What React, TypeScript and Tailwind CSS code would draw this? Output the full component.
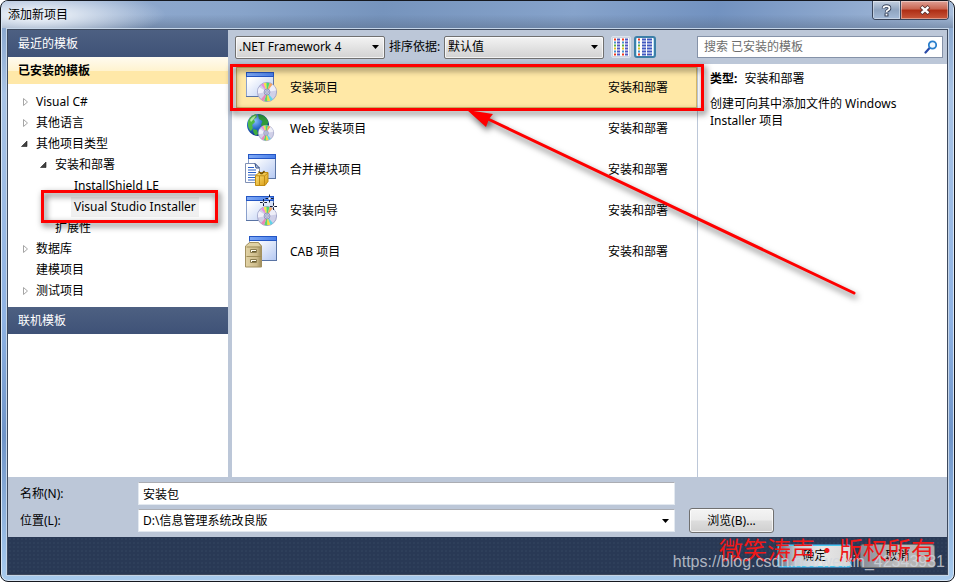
import { useState } from 'react';

const TREE = [
  { label: 'Visual C#', level: 0, state: 'closed' },
  { label: '其他语言', level: 0, state: 'closed' },
  { label: '其他项目类型', level: 0, state: 'open' },
  { label: '安装和部署', level: 1, state: 'open' },
  { label: 'InstallShield LE', level: 2, state: 'leaf' },
  { label: 'Visual Studio Installer', level: 2, state: 'leaf' },
  { label: '扩展性', level: 1, state: 'leaf' },
  { label: '数据库', level: 0, state: 'closed' },
  { label: '建模项目', level: 0, state: 'leaf' },
  { label: '测试项目', level: 0, state: 'closed' },
];

const INDENT = ['pl-[11px]', 'pl-[30px]', 'pl-[49px]'];

const TEMPLATES = [
  { name: '安装项目', icon: SetupIcon },
  { name: 'Web 安装项目', icon: WebSetupIcon },
  { name: '合并模块项目', icon: MergeIcon },
  { name: '安装向导', icon: WizardIcon },
  { name: 'CAB 项目', icon: CabIcon },
];

const ROW_COLORS = ['#f03820', '#4a90c8', '#58b040', '#e0c020', '#4a90c8', '#f03820'];

function IconDefs() {
  return (
    <svg className="absolute size-0" aria-hidden="true">
      <defs>
        <linearGradient id="win" x1="0" y1="0" x2="1" y2="1">
          <stop offset="0.2" stopColor="#ffffff" />
          <stop offset="1" stopColor="#b4c8f2" />
        </linearGradient>
        <linearGradient id="bar" x1="0" y1="0" x2="1" y2="0">
          <stop offset="0" stopColor="#7fa9f5" />
          <stop offset="1" stopColor="#4a80ea" />
        </linearGradient>
        <radialGradient id="sea" cx="0.35" cy="0.3" r="0.75">
          <stop offset="0" stopColor="#8fc4ff" />
          <stop offset="0.5" stopColor="#2566c8" />
          <stop offset="1" stopColor="#0d2f78" />
        </radialGradient>
        <linearGradient id="cab" x1="0" y1="0" x2="1" y2="0">
          <stop offset="0" stopColor="#e2d3a6" />
          <stop offset="0.7" stopColor="#cdbb8a" />
          <stop offset="1" stopColor="#9d8b58" />
        </linearGradient>
        <linearGradient id="gold" x1="0" y1="0" x2="1" y2="1">
          <stop offset="0" stopColor="#ffe680" />
          <stop offset="1" stopColor="#d89a10" />
        </linearGradient>
      </defs>
    </svg>
  );
}

function WindowShape({ x, y }: { x: number; y: number }) {
  return (
    <g transform={`translate(${x} ${y})`}>
      <rect x="0.5" y="0.5" width="27" height="24" fill="url(#win)" stroke="#8aa0cc" />
      <rect x="0" y="0" width="28" height="5" fill="#2456c4" />
      <rect x="1" y="1" width="26" height="3" fill="url(#bar)" />
      <path d="M27.5 5v20M0 24.5h28" stroke="#5a74a4" />
    </g>
  );
}

function Disc({ x, y, r }: { x: number; y: number; r: number }) {
  return (
    <g transform={`translate(${x} ${y}) scale(${r / 10})`}>
      <circle r="9.6" fill="#d0d0e8" stroke="#9498c0" strokeWidth="0.8" />
      <path d="M0 0L-6 -7.2A9.4 9.4 0 0 1 -3.4 -8.7z" fill="#e98cdc" />
      <path d="M0 0L-3.4 -8.7A9.4 9.4 0 0 1 -0.6 -9.3z" fill="#f5e440" />
      <path d="M0 0L-0.6 -9.3A9.4 9.4 0 0 1 2.6 -9z" fill="#46dc70" />
      <path d="M0 0L2.6 -9A9.4 9.4 0 0 1 5.6 -7.5z" fill="#f4a660" />
      <path d="M0 0L5.6 -7.5A9.4 9.4 0 0 1 9.2 -1.5z" fill="#eeeef8" />
      <path d="M0 0L6 7.2A9.4 9.4 0 0 1 3.2 8.8z" fill="#60d4e8" />
      <path d="M0 0L3.2 8.8A9.4 9.4 0 0 1 0.2 9.3z" fill="#f7db3a" />
      <path d="M0 0L0.2 9.3A9.4 9.4 0 0 1 -2.8 8.9z" fill="#5cd868" />
      <path d="M0 0L-2.8 8.9A9.4 9.4 0 0 1 -6 7.2z" fill="#e888b8" />
      <path d="M0 0L-9.2 1.5A9.4 9.4 0 0 1 -7.8 -5z" fill="#f0f0fa" />
      <circle r="3" fill="#c3c8e4" stroke="#8087b4" strokeWidth="0.7" />
      <circle r="1.2" fill="#ffffff" stroke="#6870a0" strokeWidth="0.6" />
    </g>
  );
}

function SetupIcon() {
  return (
    <svg className="size-[34px]" viewBox="0 0 34 34" aria-hidden="true">
      <WindowShape x={1} y={1} />
      <Disc x={22} y={21} r={10} />
    </svg>
  );
}

function WebSetupIcon() {
  return (
    <svg className="size-[34px]" viewBox="0 0 34 34" aria-hidden="true">
      <circle cx="13" cy="13" r="11" fill="url(#sea)" />
      <path d="M3 10C4 6 7 3 11 2.300L12 5L9 7.500L10 10L7 13L8 16L6 19C3.500 17 2.500 14 3 10z" fill="#4fba45" />
      <path d="M13 2.300C18 2.500 22 5.500 23.300 10L21.500 15L18.500 17L16 13L17.500 9L14 7z" fill="#2f9a3c" />
      <path d="M8 17L12 18L13 22L11 23.500C9 22.500 8 20 8 17z" fill="#3fae3f" />
      <path d="M5 8C7 5 9 4 11 3.500L9 7L6 10z" fill="#b6ecaa" />
      <Disc x={21} y={21} r={8} />
    </svg>
  );
}

function MergeIcon() {
  return (
    <svg className="size-[34px]" viewBox="0 0 34 34" aria-hidden="true">
      <WindowShape x={3} y={1} />
      <path d="M0.500 10.500h9.500l4.500 5v14h-14z" fill="#ffffff" stroke="#8090b4" />
      <path d="M10 10.500l1 4.500h3.500z" fill="#c9d5ec" stroke="#334f88" />
      <path d="M3 14.500h6M3 17h8M3 19.500h8M3 22h8M3 24.500h8M3 27h7" stroke="#2a60c8" strokeWidth="1.200" />
      <path d="M10.500 22.500l4-3h8.500v9l-3 4h-9.500z" fill="url(#gold)" stroke="#c08c14" />
      <path d="M19.500 23v9M19.500 23l3.500-3M11 22.800h8.500M14.500 23v9" fill="none" stroke="#c08c14" />
      <path d="M16.500 21l-3-2.500M16.500 21l3-3" stroke="#725006" strokeWidth="1.500" />
    </svg>
  );
}

function WizardIcon() {
  return (
    <svg className="size-[34px]" viewBox="0 0 34 34" aria-hidden="true">
      <WindowShape x={1} y={2} />
      <Disc x={22} y={22} r={10} />
      <path d="M24.500 0.500v8M20.500 4.500h8M18.500 5v7M15 8.500h7M28.500 9v7M25 12.500h7" stroke="#141c38" />
      <path d="M24.500 3l1.500 1.500-1.500 1.500-1.500-1.500zM18.500 7.500l1 1-1 1-1-1zM28.500 11.500l1 1-1 1-1-1z" fill="#ffffff" />
    </svg>
  );
}

function CabIcon() {
  return (
    <svg className="size-[34px]" viewBox="0 0 34 34" aria-hidden="true">
      <WindowShape x={4} y={1} />
      <path d="M0.500 11l4-3.500h9l3 3.500v21h-16z" fill="url(#cab)" stroke="#a39160" />
      <path d="M1 11.500l4-3.500h8l3 3.500z" fill="#e0d2a4" />
      <path d="M1.500 21.500h15M1.500 12h14" stroke="#a08e58" />
      <path d="M5.500 14.500h6v3h-6zM5.500 24.500h6v3h-6z" fill="#fffdf0" stroke="#8c7e50" />
      <path d="M7 16.500h4M7 26.500h4" stroke="#6a5d34" />
    </svg>
  );
}

function SmallIcons() {
  return (
    <svg width="16" height="18" viewBox="0 0 16 18" aria-hidden="true">
      <rect width="16" height="18" fill="#ffffff" />
      {ROW_COLORS.map((color, i) => (
        <g key={i}>
          <path d={`M1 ${i * 3 + 1.5}h2M9 ${i * 3 + 1.5}h2`} stroke={color} strokeWidth="2" />
          <path d={`M4 ${i * 3 + 1.5}h3M12 ${i * 3 + 1.5}h3`} stroke="#5058c0" strokeWidth="2" />
        </g>
      ))}
    </svg>
  );
}

function MediumIcons() {
  return (
    <svg width="16" height="18" viewBox="0 0 16 18" aria-hidden="true">
      <rect width="16" height="18" fill="#ffffff" />
      {ROW_COLORS.map((color, i) => (
        <g key={i}>
          <path d={`M1 ${i * 3 + 1.5}h2`} stroke={color} strokeWidth="2" />
          <path d={`M5 ${i * 3 + 1.5}h4M10 ${i * 3 + 1.5}h5`} stroke="#4058c0" strokeWidth="2" />
        </g>
      ))}
    </svg>
  );
}

function DropArrow() {
  return (
    <svg className="pointer-events-none absolute right-1.5 top-1/2 -translate-y-1/2" width="7" height="4" viewBox="0 0 7 4" aria-hidden="true">
      <path d="M0 0h7L3.500 4z" fill="#000000" />
    </svg>
  );
}

function TreeArrow({ state }: { state: string }) {
  return (
    <svg className="size-3" viewBox="0 0 12 12" aria-hidden="true">
      {state === 'closed' && <path d="M4.500 2.500v7l4-3.500z" fill="#ffffff" stroke="#a6a6a6" />}
      {state === 'open' && <path d="M8 3v5.500h-5.500z" fill="#404040" stroke="#202020" strokeWidth="0.600" />}
    </svg>
  );
}

function Highlight({ className }: { className: string }) {
  return (
    <div className={`pointer-events-none absolute z-10 border-3 border-[#fe0000] drop-shadow-[2px_3px_3px_rgba(0,0,0,0.65)] ${className}`} />
  );
}

function App() {
  const [selectedNode, setSelectedNode] = useState('Visual Studio Installer');
  const [selectedTemplate, setSelectedTemplate] = useState('安装项目');
  const [name, setName] = useState('安装包');

  return (
    <div className="relative flex min-h-screen flex-col overflow-hidden rounded-lg border border-[#15181f] bg-[linear-gradient(180deg,#7f9dc5_0%,#a9c4e6_16%,#8fb3e4_55%,#6f94c8_75%,#a8cbee_100%)] px-[5px] pb-[5px] font-['Noto_Sans','Noto_Sans_CJK_SC',sans-serif] text-xs text-black inset-ring inset-ring-[#d9e6f4]">
      <IconDefs />
      <div className="-mx-1 flex h-[27px] items-start justify-between bg-[radial-gradient(ellipse_130px_26px_at_34px_14px,#e4ebf4_20%,transparent_100%),linear-gradient(180deg,transparent_50%,#5b6f8c88_100%),linear-gradient(100deg,#94acd0_0%,#88a4ca_25%,#7694bd_40%,#86a3cb_60%,#7292c0_75%,#a7bddb_100%)] pr-1">
        <h1 className="py-1 pl-1.5 leading-5">添加新项目</h1>
        <div className="flex h-[19px] overflow-hidden rounded-b border border-t-0 border-[#38445a]">
          <button aria-label="帮助" className="flex w-7 items-center justify-center border-r border-[#38445a] bg-linear-to-b from-[#c5d1e1] via-[#8fa4c0] to-[#a5bbd8] inset-ring inset-ring-white/40">
            <svg width="11" height="13" viewBox="0 0 11 13" aria-hidden="true">
              <path d="M2.500 4.500Q2.500 2 5.500 2T8.500 4.200Q8.500 5.700 6.500 6.500Q5.500 7 5.500 8.500" fill="none" stroke="#3c4860" strokeWidth="3.600" />
              <path d="M3.500 9.200h4v3.300h-4z" fill="#3c4860" />
              <path d="M2.500 4.300Q2.500 2.200 5.500 2.200T8.500 4.200Q8.500 5.700 6.500 6.500Q5.500 7 5.500 8.300M5.500 9.800v1.800" fill="none" stroke="#ffffff" strokeWidth="1.800" />
            </svg>
          </button>
          <button aria-label="关闭" className="flex w-[47px] items-center justify-center bg-[linear-gradient(180deg,#dfa196_0%,#c8644f_45%,#ae2d14_50%,#c9583c_100%)] inset-ring inset-ring-white/40">
            <svg width="12" height="10" viewBox="0 0 12 10" aria-hidden="true">
              <path d="M2 1.500l8 7M10 1.500l-8 7" stroke="#55302e" strokeWidth="4" />
              <path d="M2.500 1.800l7 6.400M9.500 1.800l-7 6.400" stroke="#ffffff" strokeWidth="2.400" />
            </svg>
          </button>
        </div>
      </div>

      <div className="flex flex-1 flex-col border border-[#c5d5e8]">
        <div className="flex flex-1 flex-col border border-[#3e4a5e] bg-[#bcc7d8]">
          <div className="flex flex-1 gap-1">
            <nav className="flex w-55 flex-col bg-white">
              <h2 className="h-[27px] bg-linear-to-b from-[#4d6082] to-[#3f5277] pl-2.5 leading-[27px] text-white">最近的模板</h2>
              <h2 className="h-[27px] bg-[linear-gradient(180deg,#fffbf0_0%,#fff3d0_50%,#ffe8a8_52%,#ffe8a8_100%)] pl-2.5 font-bold leading-[27px]">已安装的模板</h2>
              <ul className="pt-[7px] pb-1.5">
                {TREE.map((node) => (
                  <li key={node.label} className={`flex h-[21px] items-center gap-0.5 ${INDENT[node.level]}`}>
                    <TreeArrow state={node.state} />
                    <button
                      onClick={() => setSelectedNode(node.label)}
                      className={`relative h-5 px-[3px] leading-5 whitespace-nowrap ${selectedNode === node.label ? 'bg-[#f0f0f0]' : ''}`}
                    >
                      {node.label}
                      {node.label === 'Visual Studio Installer' && <Highlight className="-top-[7px] -bottom-1.5 -left-[30px] w-[177px]" />}
                    </button>
                  </li>
                ))}
              </ul>
              <h2 className="h-[27px] bg-linear-to-b from-[#4d6082] to-[#3f5277] pl-2.5 leading-[27px] text-white">联机模板</h2>
            </nav>

            <div className="flex flex-1 flex-col">
              <div className="flex h-[34px] items-center">
                <div className="flex flex-1 items-center pl-[3px]">
                  <div className="relative w-[150px]">
                    <select aria-label="框架" className="h-[23px] w-full appearance-none rounded-xs border border-[#707070] bg-linear-to-b from-[#f3f3f3] to-[#d2d2d2] pl-[3px] inset-ring inset-ring-white/70">
                      <option>.NET Framework 4</option>
                    </select>
                    <DropArrow />
                  </div>
                  <label htmlFor="sort" className="w-[59px] pl-1 whitespace-nowrap">排序依据:</label>
                  <div className="relative w-40">
                    <select id="sort" className="h-[23px] w-full appearance-none rounded-xs border border-[#707070] bg-linear-to-b from-[#f3f3f3] to-[#d2d2d2] pl-[3px] inset-ring inset-ring-white/70">
                      <option>默认值</option>
                    </select>
                    <DropArrow />
                  </div>
                  <button aria-label="小图标" className="ml-[7px] flex h-[22px] w-5 items-center justify-center rounded-xs border border-[#dce3ec] bg-[#cdd6e3]">
                    <SmallIcons />
                  </button>
                  <button aria-label="中等图标" className="ml-[3px] flex size-[22px] items-center justify-center rounded-[3px] border-2 border-[#3c7fa8] bg-[#bfe2f5]">
                    <MediumIcons />
                  </button>
                </div>
                <div className="w-[250px] pr-1">
                  <div className="flex h-[22px] items-center border border-[#8592a8] bg-white pr-1">
                    <input type="search" aria-label="搜索" placeholder="搜索 已安装的模板" className="min-w-0 flex-1 pl-1.5 outline-none placeholder:text-[#6d6d6d]" />
                    <svg width="14" height="14" viewBox="0 0 14 14" aria-hidden="true">
                      <path d="M1.500 12.500l4.500-5" stroke="#2a4aa8" strokeWidth="2.200" strokeLinecap="round" />
                      <circle cx="8.500" cy="5" r="3.700" fill="#f2f9ff" stroke="#2a7fcc" strokeWidth="1.800" />
                    </svg>
                  </div>
                </div>
              </div>

              <div className="flex flex-1 bg-white">
                <ul className="flex-1 pt-[3px] pl-1">
                  {TEMPLATES.map(({ name: label, icon: Icon }) => (
                    <li key={label} className="relative">
                      <button
                        onClick={() => setSelectedTemplate(label)}
                        className={`flex h-[41px] w-full items-center border pl-2 text-left ${selectedTemplate === label ? 'border-[#d8b968] bg-[#ffe8a6]' : 'border-transparent'}`}
                      >
                        <Icon />
                        <span className="flex-1 pl-[11px]">{label}</span>
                        <span className="w-22">安装和部署</span>
                      </button>
                      {label === '安装项目' && <Highlight className="-top-[3px] -right-[7px] -bottom-[3px] -left-1.5" />}
                    </li>
                  ))}
                </ul>
                <aside className="w-[250px] border-l border-[#bcc7d8] px-3 pt-1.5 leading-[17px]">
                  <p><strong>类型:</strong><span className="pl-[7px]">安装和部署</span></p>
                  <p className="pt-2">创建可向其中添加文件的 Windows Installer 项目</p>
                </aside>
              </div>
            </div>
          </div>

          <form className="grid grid-cols-[104px_1fr_85px] items-center gap-x-3.5 gap-y-[3px] pt-[5px] pr-[173px] pb-1 pl-3" onSubmit={(e) => e.preventDefault()}>
            <label htmlFor="name">名称(N):</label>
            <input id="name" type="text" value={name} onChange={(e) => setName(e.target.value)} className="h-[23px] min-w-0 border border-[#e3e9f0] border-t-[#abadb3] bg-white px-1 outline-none" />
            <span />
            <label htmlFor="location">位置(L):</label>
            <div className="relative">
              <select id="location" className="h-[23px] w-full appearance-none border border-[#e3e9f0] border-t-[#abadb3] bg-white px-1">
                <option>D:\信息管理系统改良版</option>
              </select>
              <DropArrow />
            </div>
            <button type="button" className="h-[25px] rounded-[3px] border border-[#707070] bg-[linear-gradient(180deg,#f4f4f4_0%,#ebebeb_48%,#dddddd_52%,#cfcfcf_100%)] inset-ring inset-ring-white/70">浏览(B)...</button>
          </form>

          <footer className="relative flex h-[37px] items-center justify-end gap-2 bg-[#293955] bg-[radial-gradient(circle,#32435f_0.5px,transparent_1px)] bg-size-[4px_4px] pr-3">
            <button className="h-6 w-[75px] rounded-[3px] border border-[#3c7fb1] bg-[linear-gradient(90deg,#5d6a80_0%,#c4cbd2_25%,#e6e6e6_60%,#d8d8d8_100%)] inset-ring inset-ring-[#48c8ee]">确定</button>
            <button className="h-6 w-[75px] rounded-[3px] border border-[#707070] bg-linear-to-r from-[#858b97] via-[#bebebe] to-[#aaaaaa]">取消</button>
            <div lang="zh-CN" className="pointer-events-none absolute -top-0.5 right-3 font-['Noto_Sans_CJK_SC',sans-serif] text-2xl leading-7 whitespace-nowrap text-[#f01818]">微笑涛声·版权所有</div>
            <div className="pointer-events-none absolute right-0.5 bottom-0.5 font-['Liberation_Sans',sans-serif] text-base leading-5 whitespace-nowrap text-[#d2d6de]/80">https://blog.csdn.net/weixin_42343931</div>
          </footer>
        </div>
      </div>

      {/* callout arrow pointing at the selected template */}
      <svg className="pointer-events-none absolute top-[100px] left-[460px] z-20 drop-shadow-[2px_4px_3px_rgba(0,0,0,0.6)]" width="410" height="210" viewBox="461 101 410 210" aria-hidden="true">
        <path d="M488 119L854 293" stroke="#fe0000" strokeWidth="3" strokeLinecap="round" />
        <path d="M467 110L493 114L489 119L486 127z" fill="#fe0000" />
      </svg>
    </div>
  );
}

export default App;
